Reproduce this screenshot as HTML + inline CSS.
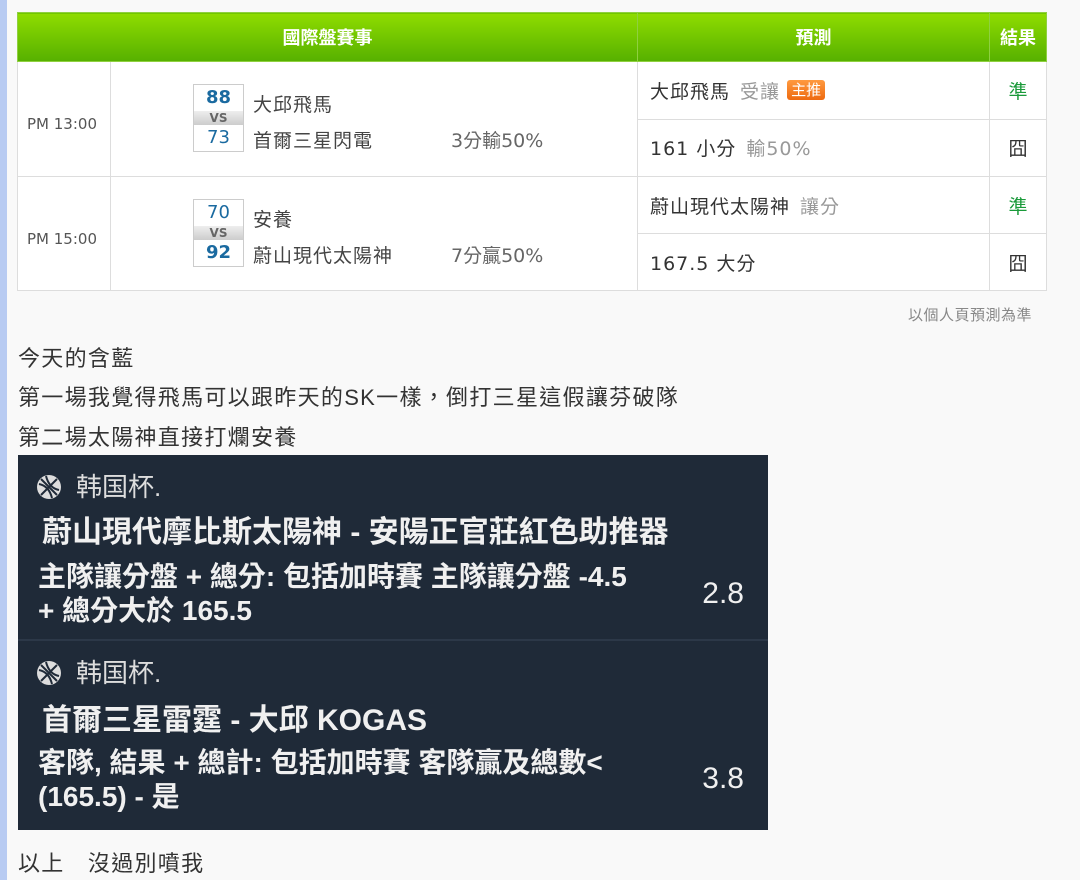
<!DOCTYPE html>
<html><head><meta charset="utf-8"><style>
*{margin:0;padding:0;box-sizing:border-box}
body{width:1080px;height:880px;background:#f9f9f9;font-family:"Liberation Sans","Noto Sans CJK TC",sans-serif;position:relative;overflow:hidden;color:#333}
.stripe{position:absolute;left:0;top:0;width:7px;height:880px;background:#b8cbf2}
table{position:absolute;left:17px;top:12px;width:1030px;border-collapse:collapse;background:#fff;font-family:"DejaVu Sans","Noto Sans CJK TC",sans-serif}
td,th{border:1px solid #ddd;font-size:18px}
th{height:49px;background:linear-gradient(#8fdc00,#56b000);color:#fff;font-weight:bold;border-color:#8fd040;font-size:18px;font-family:"Liberation Sans","Noto Sans CJK TC",sans-serif}
.time{font-size:15px;color:#555;padding-left:9px;padding-top:10px;width:93px}
.match{position:relative;width:527px}
.sc{position:absolute;left:82px;width:51px;border:1px solid #ccc;background:#fff;text-align:center;color:#1a6aa0;font-size:18px}
.sc div{height:26px;line-height:26px}
.sc .vs{height:14px;line-height:14px;font-size:12px;color:#666;background:linear-gradient(#eee,#ccc);font-weight:bold}
.tm{position:absolute;left:142px;font-size:19px;color:#444;letter-spacing:1px}
.pct{position:absolute;left:340px;font-size:19px;color:#666}
.pr{padding-left:12px;height:57px;font-size:19px;color:#333;width:352px;letter-spacing:1px}
.g{color:#999;margin-left:10px}
.res{text-align:center;font-size:19px}
.ok{color:#1a9a3a}
.tag{display:inline-block;background:linear-gradient(#ff9a40,#ee6a10);color:#fff;font-size:15px;padding:0 4px;border-radius:3px;vertical-align:3px;line-height:20px;letter-spacing:0}
.note{position:absolute;left:908px;top:304px;font-size:15px;color:#888;letter-spacing:0.5px}
.p{position:absolute;left:18px;font-size:22px;color:#333;letter-spacing:1.3px}
.card{position:absolute;left:18px;width:750px;background:#1f2a38;color:#f0f0f0;font-family:"Liberation Sans Narrow","Liberation Sans","Noto Sans CJK TC",sans-serif}
.card .h{position:absolute;left:18px;font-size:26px;color:#ddd}
.card .t{position:absolute;left:24px;font-size:30px;font-weight:bold;white-space:nowrap}
.card .d{position:absolute;left:20px;font-size:28px;font-weight:bold;line-height:34px;white-space:nowrap}
.card .o{position:absolute;right:24px;font-size:30px}
.ball{display:inline-block;width:26px;height:26px;vertical-align:-4px;margin-right:14px}
</style></head><body>
<div class="stripe"></div>
<table>
<tr><th colspan="2">國際盤賽事</th><th>預測</th><th style="width:57px">結果</th></tr>
<tr><td class="time" rowspan="2" style="height:115px">PM 13:00</td>
<td class="match" rowspan="2"><div class="sc" style="top:22px"><div style="font-weight:bold">88</div><div class="vs">VS</div><div>73</div></div>
<div class="tm" style="top:28px">大邱飛馬</div><div class="tm" style="top:64px">首爾三星閃電</div><div class="pct" style="top:64px">3分輸50%</div></td>
<td class="pr">大邱飛馬<span class="g">受讓</span> <span class="tag">主推</span></td><td class="res ok">準</td></tr>
<tr><td class="pr">161 小分<span class="g">輸50%</span></td><td class="res">囧</td></tr>
<tr><td class="time" rowspan="2" style="height:114px">PM 15:00</td>
<td class="match" rowspan="2"><div class="sc" style="top:22px"><div>70</div><div class="vs">VS</div><div style="font-weight:bold">92</div></div>
<div class="tm" style="top:28px">安養</div><div class="tm" style="top:64px">蔚山現代太陽神</div><div class="pct" style="top:64px">7分贏50%</div></td>
<td class="pr">蔚山現代太陽神<span class="g">讓分</span></td><td class="res ok">準</td></tr>
<tr><td class="pr">167.5 大分</td><td class="res">囧</td></tr>
</table>
<div class="note">以個人頁預測為準</div>
<div class="p" style="top:341px">今天的含藍</div>
<div class="p" style="top:380px">第一場我覺得飛馬可以跟昨天的SK一樣，倒打三星這假讓芬破隊</div>
<div class="p" style="top:420px">第二場太陽神直接打爛安養</div>
<div class="card" style="top:455px;height:186px;border-bottom:2px solid #2c3848">
<div class="h" style="top:12px"><svg class="ball" viewBox="0 0 26 26"><circle cx="13" cy="13" r="12" fill="#ddd"/><path d="M5 5 L21 21 M21 5 L5 21 M3 10 Q13 12 16 24 M23 16 Q13 14 10 2" stroke="#1f2a38" stroke-width="2" fill="none"/></svg>韩国杯.</div>
<div class="t" style="top:52px">蔚山現代摩比斯太陽神 - 安陽正官莊紅色助推器</div>
<div class="d" style="top:105px">主隊讓分盤 + 總分: 包括加時賽 主隊讓分盤 -4.5<br>+ 總分大於 165.5</div>
<div class="o" style="top:122px">2.8</div>
</div>
<div class="card" style="top:641px;height:189px">
<div class="h" style="top:12px"><svg class="ball" viewBox="0 0 26 26"><circle cx="13" cy="13" r="12" fill="#ddd"/><path d="M5 5 L21 21 M21 5 L5 21 M3 10 Q13 12 16 24 M23 16 Q13 14 10 2" stroke="#1f2a38" stroke-width="2" fill="none"/></svg>韩国杯.</div>
<div class="t" style="top:54px">首爾三星雷霆 - 大邱 KOGAS</div>
<div class="d" style="top:105px">客隊, 結果 + 總計: 包括加時賽 客隊贏及總數&lt;<br>(165.5) - 是</div>
<div class="o" style="top:121px">3.8</div>
</div>
<div class="p" style="top:846px">以上　沒過別噴我</div>
</body></html>
